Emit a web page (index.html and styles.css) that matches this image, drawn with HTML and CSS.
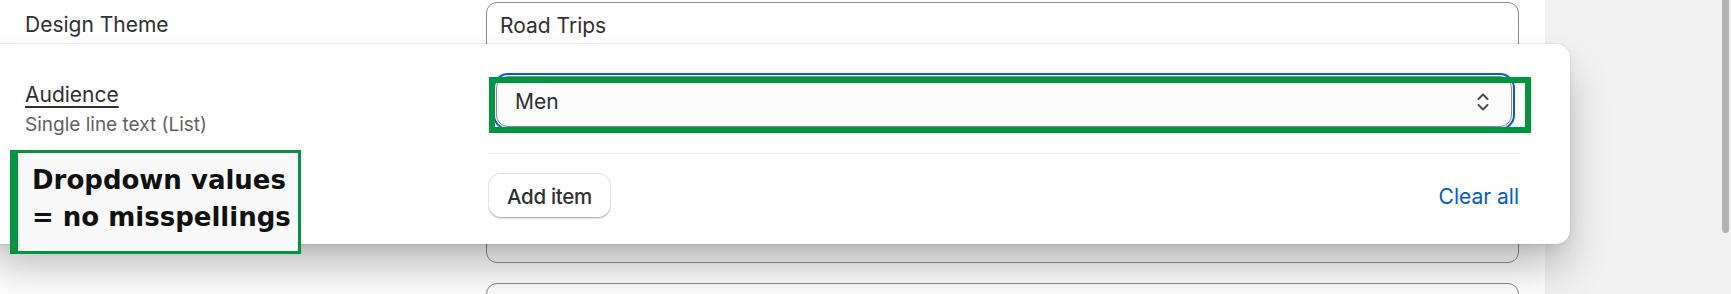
FILE: index.html
```html
<!DOCTYPE html>
<html lang="en">
<head>
<meta charset="utf-8">
<title>Audience metafield</title>
<link rel="stylesheet" href="styles.css">
</head>
<body>
<div class="page">
  <main class="card">
    <div class="row">
      <div class="row-label">Design Theme</div>
      <div class="input input-text"><span>Road Trips</span></div>
    </div>
    <div class="row">
      <div class="row-label"></div>
      <div class="input input-tall"></div>
    </div>
    <div class="row">
      <div class="row-label"></div>
      <div class="input"></div>
    </div>
    <div class="row">
      <div class="row-label"></div>
      <div class="input"></div>
    </div>
  </main>
  <aside class="rail">
    <div class="thumb"></div>
  </aside>

  <section class="popover">
    <div class="pop-label">
      <div class="pop-name">Audience</div>
      <div class="pop-type">Single line text (List)</div>
    </div>
    <div class="pop-field">
      <div class="select">
        <span class="select-value">Men</span>
        <svg class="select-icon" viewBox="0 0 14 22" width="14" height="22" aria-hidden="true">
          <polyline points="2.5,8 7,3.5 11.5,8" />
          <polyline points="2.5,14 7,18.5 11.5,14" />
        </svg>
      </div>
      <div class="divider"></div>
      <div class="footer">
        <button class="btn">Add item</button>
        <span class="link">Clear all</span>
      </div>
    </div>
  </section>

  <div class="highlight"></div>
  <div class="note">Dropdown values<br>= no misspellings</div>
</div>
</body>
</html>
```

FILE: styles.css
```css
* { box-sizing: border-box; }

html, body {
  margin: 0;
  padding: 0;
  width: 1731px;
  height: 294px;
  overflow: hidden;
  background: #f1f1f1;
  font-family: Inter, "Noto Sans", sans-serif;
  color: #303030;
}

.page {
  position: relative;
  display: flex;
  width: 1731px;
  height: 294px;
  overflow: hidden;
}

.card {
  width: 1545px;
  height: 294px;
  flex: none;
  overflow: hidden;
  background: #ffffff;
  padding: 2px 26px 0 25px;
  display: flex;
  flex-direction: column;
  gap: 20px;
}

.row {
  display: grid;
  grid-template-columns: 461px 1fr;
  align-items: start;
  flex: none;
}

.row-label {
  font-size: 21px;
  line-height: 29px;
  padding-top: 8px;
}

.input {
  height: 53px;
  border: 1px solid #8a8a8a;
  border-radius: 11px;
  background: #ffffff;
}

.input-tall { height: 115px; }

.input-text {
  display: flex;
  align-items: center;
  padding: 0 0 6px 13px;
  font-size: 21px;
  line-height: 29px;
}

.rail {
  flex: 1;
  display: flex;
  justify-content: flex-end;
  padding-right: 2px;
}

.thumb {
  width: 7px;
  height: 233px;
  background: #b3b3b3;
  border-radius: 0 0 4px 4px;
}

.popover {
  position: absolute;
  top: 44px;
  left: -14px;
  width: 1584px;
  background: #ffffff;
  border-radius: 14px;
  box-shadow: 0 0 0 1px rgba(0, 0, 0, 0.05),
              0 26px 44px -6px rgba(26, 26, 26, 0.32),
              0 4px 10px rgba(0, 0, 0, 0.06);
  padding: 32px 51px 26px 39px;
  display: grid;
  grid-template-columns: 464px 1fr;
  align-items: start;
}

.pop-label {
  padding-top: 4px;
  font-size: 21px;
  line-height: 29px;
}

.pop-name {
  text-decoration: underline;
  text-decoration-thickness: 2px;
  text-underline-offset: 4px;
}

.pop-type {
  color: #616161;
  font-size: 19px;
  padding-top: 1px;
}

.pop-field {
  display: flex;
  flex-direction: column;
}

.select {
  margin: 0 7px;
  height: 51px;
  border: 1px solid #8a8a8a;
  border-radius: 12px;
  background: #fafafa;
  outline: 2px solid #005bd3;
  outline-offset: 1px;
  display: flex;
  align-items: center;
  justify-content: space-between;
  padding: 0 21px 0 18px;
  font-size: 21px;
}

.select-icon {
  fill: none;
  stroke: #4a4a4a;
  stroke-width: 2;
  stroke-linecap: round;
  stroke-linejoin: round;
}

.divider {
  margin-top: 26px;
  height: 1px;
  background: #ebebeb;
}

.footer {
  margin-top: 20px;
  display: flex;
  justify-content: space-between;
  align-items: center;
}

.btn {
  height: 44px;
  padding: 0 18px;
  border: none;
  border-radius: 12px;
  background: #ffffff;
  box-shadow: 0 0 0 1px #e3e3e3, inset 0 -1px 0 #b5b5b5;
  font-family: Inter, "Noto Sans", sans-serif;
  font-size: 20.5px;
  font-weight: 500;
  letter-spacing: -0.3px;
  color: #303030;
}

.link {
  font-size: 21px;
  color: #005bd3;
}

.highlight {
  position: absolute;
  left: 489px;
  top: 77px;
  width: 1042px;
  height: 56px;
  border: 6px solid #00963f;
}

.note {
  position: absolute;
  left: 10px;
  top: 150px;
  width: 291px;
  height: 104px;
  border: 3px solid #00963f;
  border-left-width: 8px;
  background: #f9f9f9;
  padding: 9px 0 0 14px;
  font-family: "DejaVu Sans", Verdana, sans-serif;
  font-weight: bold;
  font-size: 26px;
  line-height: 36.5px;
  color: #111111;
  white-space: nowrap;
}
```
